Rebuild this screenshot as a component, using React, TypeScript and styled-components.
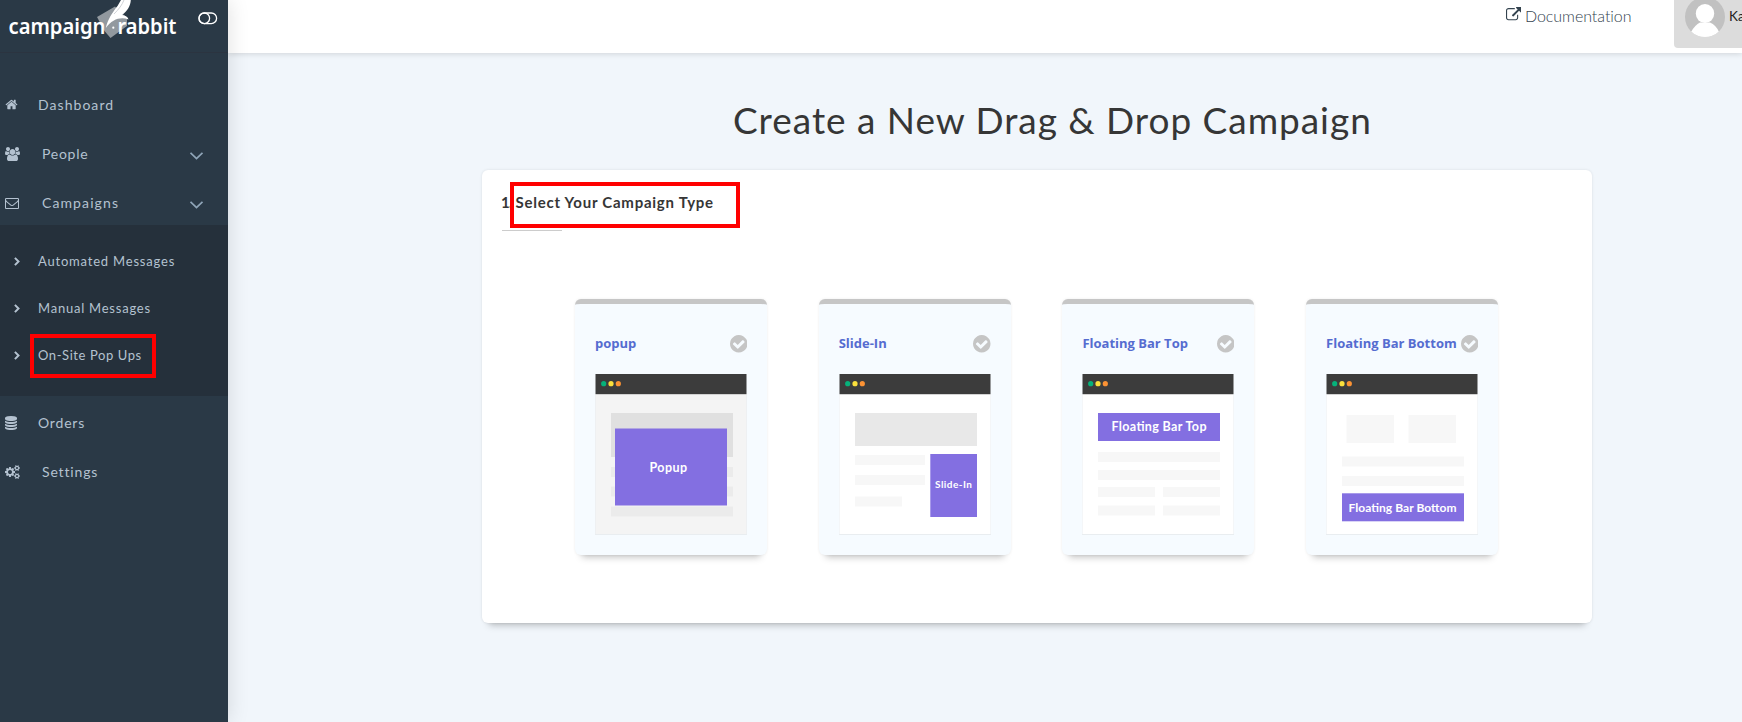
import React from 'react';
import styled, { createGlobalStyle } from 'styled-components';

const Global = createGlobalStyle`
  * { box-sizing: border-box; }
  body {
    margin: 0;
    height: 722px;
    overflow: hidden;
    background: #f1f6fb;
    font-family: Lato, "Liberation Sans", sans-serif;
    color: #363636;
  }
  svg { display: block; flex: none; }
`;

const icons = {
  home: {
    box: '0 0 1792 1792',
    d: 'M1472 992v480q0 26-19 45t-45 19h-384v-384h-256v384h-384q-26 0-45-19t-19-45v-480q0-1 .5-3t.5-3l575-474 575 474q1 2 1 6zm223-69l-62 74q-8 9-21 11h-3q-13 0-21-7l-692-577-692 577q-12 8-24 7-13-2-21-11l-62-74q-8-10-7-23.5t11-21.5l719-599q32-26 76-26t76 26l244 204v-195q0-14 9-23t23-9h192q14 0 23 9t9 23v408l219 182q10 8 11 21.5t-7 23.5z',
  },
  users: {
    box: '-64 0 1920 1792',
    d: 'M529 896q-162 5-265 128h-134q-82 0-138-40.5t-56-118.5q0-353 124-353 6 0 43.5 21t97.5 42.5 119 21.5q67 0 133-23-5 37-5 66 0 139 81 256zm1071 637q0 120-73 189.5t-194 69.5h-874q-121 0-194-69.5t-73-189.5q0-53 3.5-103.5t14-109 26.5-108.5 43-97.5 62-81 85.5-53.5 111.5-20q10 0 43 21.5t73 48 107 48 135 21.5 135-21.5 107-48 73-48 43-21.5q61 0 111.5 20t85.5 53.5 62 81 43 97.5 26.5 108.5 14 109 3.5 103.5zm-1024-1277q0 106-75 181t-181 75-181-75-75-181 75-181 181-75 181 75 75 181zm704 384q0 159-112.5 271.5t-271.5 112.5-271.5-112.5-112.5-271.5 112.5-271.5 271.5-112.5 271.5 112.5 112.5 271.5zm576 225q0 78-56 118.5t-138 40.5h-134q-103-123-265-128 81-117 81-256 0-29-5-66 66 23 133 23 59 0 119-21.5t97.5-42.5 43.5-21q124 0 124 353zm-128-609q0 106-75 181t-181 75-181-75-75-181 75-181 181-75 181 75 75 181z',
  },
  envelope: {
    box: '0 0 1792 1792',
    d: 'M1664 1504v-768q-32 36-69 66-268 206-426 338-51 43-83 67t-86.5 48.5-102.5 24.5h-2q-48 0-102.5-24.5t-86.5-48.5-83-67q-158-132-426-338-37-30-69-66v768q0 13 9.5 22.5t22.5 9.5h1472q13 0 22.5-9.5t9.5-22.5zm0-1051v-24.5l-.5-13-3-12.5-5.5-9-9-7.5-14-2.5h-1472q-13 0-22.5 9.5t-9.5 22.5q0 168 147 284 193 152 401 317 6 5 35 29.5t46 37.5 44.5 31.5 50.5 27.5 43 9h2q20 0 43-9t50.5-27.5 44.5-31.5 46-37.5 35-29.5q208-165 401-317 54-43 100.5-115.5t46.5-131.5zm128-37v1088q0 66-47 113t-113 47h-1472q-66 0-113-47t-47-113v-1088q0-66 47-113t113-47h1472q66 0 113 47t47 113z',
  },
  database: {
    box: '128 0 1536 1792',
    d: 'M896 768q237 0 443-43t325-127v170q0 69-103 128t-280 93.5-385 34.5-385-34.5-280-93.5-103-128v-170q119 84 325 127t443 43zm0 768q237 0 443-43t325-127v170q0 69-103 128t-280 93.5-385 34.5-385-34.5-280-93.5-103-128v-170q119 84 325 127t443 43zm0-384q237 0 443-43t325-127v170q0 69-103 128t-280 93.5-385 34.5-385-34.5-280-93.5-103-128v-170q119 84 325 127t443 43zm0-1152q208 0 385 34.5t280 93.5 103 128v128q0 69-103 128t-280 93.5-385 34.5-385-34.5-280-93.5-103-128v-128q0-69 103-128t280-93.5 385-34.5z',
  },
  cogs: {
    box: '-64 0 1920 1792',
    d: 'M832 896q0-106-75-181t-181-75-181 75-75 181 75 181 181 75 181-75 75-181zm768 512q0-52-38-90t-90-38-90 38-38 90q0 53 37.5 90.5t90.5 37.5 90.5-37.5 37.5-90.5zm0-1024q0-52-38-90t-90-38-90 38-38 90q0 53 37.5 90.5t90.5 37.5 90.5-37.5 37.5-90.5zm-384 421v185q0 10-7 19.5t-16 10.5l-155 24q-11 35-32 76 34 48 90 115 7 11 7 20 0 12-7 19-23 30-82.5 89.5t-78.5 59.5q-11 0-21-7l-115-90q-37 19-77 31-11 108-23 155-7 24-30 24h-186q-11 0-20-7.5t-10-17.5l-23-153q-34-10-75-31l-118 89q-7 7-20 7-11 0-21-8-144-133-144-160 0-9 7-19 10-14 41-53t47-61q-23-44-35-82l-152-24q-10-1-17-9.5t-7-19.5v-185q0-10 7-19.5t16-10.5l155-24q11-35 32-76-34-48-90-115-7-11-7-20 0-12 7-20 22-30 82-89t79-59q11 0 21 7l115 90q34-18 77-32 11-108 23-154 7-24 30-24h186q11 0 20 7.5t10 17.5l23 153q34 10 75 31l118-89q8-7 20-7 11 0 21 8 144 133 144 160 0 8-7 19-12 16-42 54t-45 60q23 48 34 82l152 23q10 2 17 10.5t7 19.5zm640 533v140q0 16-149 31-12 27-30 52 51 113 51 138 0 4-4 7-122 71-124 71-8 0-46-47t-52-68q-20 2-30 2t-30-2q-14 21-52 68t-46 47q-2 0-124-71-4-3-4-7 0-25 51-138-18-25-30-52-149-15-149-31v-140q0-16 149-31 13-29 30-52-51-113-51-138 0-4 4-7 4-2 35-20t59-34 30-16q8 0 46 46.5t52 67.5q20-2 30-2t30 2q51-71 92-112l6-2q4 0 124 70 4 3 4 7 0 25-51 138 17 23 30 52 149 15 149 31zm0-1024v140q0 16-149 31-12 27-30 52 51 113 51 138 0 4-4 7-122 71-124 71-8 0-46-47t-52-68q-20 2-30 2t-30-2q-14 21-52 68t-46 47q-2 0-124-71-4-3-4-7 0-25 51-138-18-25-30-52-149-15-149-31v-140q0-16 149-31 13-29 30-52-51-113-51-138 0-4 4-7 4-2 35-20t59-34 30-16q8 0 46 46.5t52 67.5q20-2 30-2t30 2q51-71 92-112l6-2q4 0 124 70 4 3 4 7 0 25-51 138 17 23 30 52 149 15 149 31z',
  },
  external: {
    box: '0 0 1792 1792',
    d: 'M1408 928v320q0 119-84.5 203.5t-203.5 84.5h-832q-119 0-203.5-84.5t-84.5-203.5v-832q0-119 84.5-203.5t203.5-84.5h704q14 0 23 9t9 23v64q0 14-9 23t-23 9h-704q-66 0-113 47t-47 113v832q0 66 47 113t113 47h832q66 0 113-47t47-113v-320q0-14 9-23t23-9h64q14 0 23 9t9 23zm384-864v512q0 26-19 45t-45 19-45-19l-176-176-652 652q-10 10-23 10t-23-10l-114-114q-10-10-10-23t10-23l652-652-176-176q-19-19-19-45t19-45 45-19h512q26 0 45 19t19 45z',
  },
  check: {
    box: '128 128 1536 1536',
    d: 'M1412 734q0-28-18-46l-91-90q-19-19-45-19t-45 19l-408 407-226-226q-19-19-45-19t-45 19l-91 90q-18 18-18 46 0 27 18 45l362 362q19 19 45 19 27 0 46-19l543-543q18-18 18-45zm252 162q0 209-103 385.5t-279.5 279.5-385.5 103-385.5-103-279.5-279.5-103-385.5 103-385.5 279.5-279.5 385.5-103 385.5 103 279.5 279.5 103 385.5z',
  },
};

type IconName = keyof typeof icons;

const Icon = ({ name, width, height }: { name: IconName; width: number; height: number }) => (
  <svg width={width} height={height} viewBox={icons[name].box} fill="currentColor">
    <path d={icons[name].d} />
  </svg>
);

const Page = styled.div`
  display: flex;
  height: 722px;
  overflow: hidden;
`;

const Sidebar = styled.aside`
  position: relative;
  z-index: 2;
  flex: none;
  width: 228px;
  background: #2a3946;
  color: #b4c2d0;
  box-shadow: 1px 0 20px rgba(0, 0, 0, 0.12);
`;

const Brand = styled.div`
  display: flex;
  justify-content: space-between;
  height: 53px;
  padding-right: 10px;
  border-bottom: 1px solid #2b3440;
`;

const Toggle = styled.svg`
  margin-top: 12px;
`;

const Nav = styled.nav`
  padding-top: 27px;
`;

const NavRow = styled.a`
  display: flex;
  align-items: center;
  height: 49px;
  padding: 0 25px 0 5px;
`;

const NavIcon = styled.span<{ $gap: number }>`
  flex: none;
  width: ${(p) => p.$gap}px;
`;

const NavText = styled.span<{ $spacing: number }>`
  flex: 1;
  font-size: 14px;
  line-height: 20px;
  letter-spacing: ${(p) => p.$spacing}px;
  white-space: nowrap;
`;

const SubMenu = styled.div`
  height: 171px;
  margin: -2px 0 2px;
  padding-top: 13px;
  background: #25303b;
`;

const SubRow = styled(NavRow)`
  height: 47px;
  padding-left: 14px;
`;

const SubText = styled(NavText)`
  padding-bottom: 2px;
  font-size: 13px;
`;

const Marker = styled.span<{ $x: number; $y: number; $w: number; $h: number }>`
  position: absolute;
  left: ${(p) => p.$x}px;
  top: ${(p) => p.$y}px;
  width: ${(p) => p.$w}px;
  height: ${(p) => p.$h}px;
  border: 4px solid #ff0000;
`;

const Content = styled.div`
  flex: 1;
  min-width: 0;
`;

const TopBar = styled.header`
  display: flex;
  justify-content: flex-end;
  height: 53px;
  background: #fff;
  box-shadow: 0 1px 6px rgba(0, 0, 0, 0.14);
`;

const DocLink = styled.a`
  display: flex;
  align-items: center;
  gap: 4px;
  height: 30px;
  margin-right: 43px;
  color: #34434f;
`;

const DocText = styled.span`
  width: 106px;
  padding-top: 1px;
  font-size: 16px;
  line-height: 20px;
  font-weight: 300;
  letter-spacing: -0.05px;
  white-space: nowrap;
`;

const User = styled.div`
  display: flex;
  gap: 4px;
  width: 68px;
  height: 48px;
  padding-left: 11px;
  overflow: hidden;
  border-radius: 0 0 0 4px;
  background: #dcdcdc;
  color: #222;
  font-size: 13.5px;
  line-height: 33px;
  white-space: nowrap;
`;

const Heading = styled.h1`
  margin: 45px 0 0;
  padding-left: 505px;
  font-size: 37px;
  line-height: 44px;
  font-weight: 400;
  letter-spacing: 0.97px;
  white-space: nowrap;
`;

const Panel = styled.section`
  position: relative;
  width: 1110px;
  height: 453px;
  margin: 28px 0 0 254px;
  padding: 22px 20px 0;
  border-radius: 6px;
  background: #fff;
  box-shadow: 0 0 3px rgba(0, 0, 0, 0.1), 0 9px 7px -7px rgba(0, 0, 0, 0.25);
`;

const PanelTitle = styled.h2`
  display: flex;
  margin: 0 0 0 -1px;
  height: 38px;
  font-size: 15px;
  line-height: 20px;
  font-weight: 700;
  letter-spacing: 0.75px;
`;

const Step = styled.span`
  width: 14.5px;
  letter-spacing: -0.8px;
`;

const Rule = styled.div`
  width: 60px;
  height: 1px;
  margin-bottom: 68px;
  background: #ccc;
`;

const Cards = styled.div`
  display: flex;
  gap: 51.7px;
  padding-left: 73px;
`;

const Card = styled.article`
  flex: none;
  width: 192px;
  height: 256px;
  padding: 31px 20px 0;
  border-top: 5px solid #c6c6c6;
  border-radius: 6px;
  background: #f6fbff;
  box-shadow: 0 0 3px rgba(0, 0, 0, 0.07), 0 9px 7px -7px rgba(0, 0, 0, 0.25);
`;

const CardHead = styled.div`
  display: flex;
  align-items: center;
  justify-content: space-between;
  height: 18px;
  margin-bottom: 21px;
  color: #c5c5c5;
`;

const CardTitle = styled.h3`
  margin: 0;
  padding-bottom: 2px;
  font-family: "Open Sans", sans-serif;
  font-size: 13px;
  line-height: 18px;
  font-weight: 700;
  white-space: nowrap;
  color: #556cd0;
`;

const Thumb = styled.svg`
  overflow: visible;
  font-family: Lato, sans-serif;
  font-weight: 700;
`;

const PURPLE = '#836fe1';

type Block = [number, number, number, number, string];
type CardSpec = {
  title: string;
  page: string;
  blocks: Block[];
  label: { text: string; x: number; y: number; length: number; size: number };
};

const cards: CardSpec[] = [
  {
    title: 'popup',
    page: '#f4f4f4',
    blocks: [
      [16, 39, 122, 44, '#e0e0e0'],
      [16, 93, 122, 10, '#ebebeb'],
      [16, 112.5, 122, 10, '#ebebeb'],
      [16, 132.5, 122, 10, '#ebebeb'],
      [20, 54.5, 112, 77, PURPLE],
    ],
    label: { text: 'Popup', x: 54.5, y: 98, length: 37.5, size: 12.5 },
  },
  {
    title: 'Slide-In',
    page: '#fff',
    blocks: [
      [16, 39, 122, 33, '#e8e8e8'],
      [16, 81, 70, 10, '#f7f7f7'],
      [16, 101, 70, 10, '#f7f7f7'],
      [16, 122.5, 47, 10, '#f7f7f7'],
      [91.3, 80, 46.7, 63, PURPLE],
    ],
    label: { text: 'Slide-In', x: 96, y: 113.5, length: 37, size: 10 },
  },
  {
    title: 'Floating Bar Top',
    page: '#fff',
    blocks: [
      [16, 39, 122, 28, PURPLE],
      [16, 78, 122, 10, '#f7f7f7'],
      [16, 96, 122, 10, '#f7f7f7'],
      [16, 113, 57, 10, '#f7f7f7'],
      [81, 113, 57, 10, '#f7f7f7'],
      [16, 131.5, 57, 10, '#f7f7f7'],
      [81, 131.5, 57, 10, '#f7f7f7'],
    ],
    label: { text: 'Floating Bar Top', x: 29.5, y: 57, length: 95, size: 12.5 },
  },
  {
    title: 'Floating Bar Bottom',
    page: '#fff',
    blocks: [
      [20.5, 41, 47.5, 28, '#f7f7f7'],
      [82.5, 41, 47.5, 28, '#f7f7f7'],
      [16, 82.5, 122, 10, '#f7f7f7'],
      [16, 102, 122, 10, '#f7f7f7'],
      [16, 119.3, 122, 28, PURPLE],
    ],
    label: { text: 'Floating Bar Bottom', x: 22.5, y: 138, length: 108, size: 12 },
  },
];

const Preview = ({ spec }: { spec: CardSpec }) => (
  <Thumb width="152" height="161" viewBox="0 0 152 161">
    <rect x="0" y="20" width="152" height="141" fill="#e9edf0" />
    <rect x="0.5" y="20" width="151" height="140" fill={spec.page} />
    <rect x="0.5" y="0" width="151" height="20" fill="#3c3c3c" />
    <rect x="0.5" y="20" width="151" height="0.8" fill="#c8c8c8" />
    <circle cx="8.7" cy="9.7" r="2.6" fill="#06b27b" />
    <circle cx="16" cy="9.7" r="2.6" fill="#fbe03c" />
    <circle cx="23.3" cy="9.7" r="2.6" fill="#fb9234" />
    {spec.blocks.map(([x, y, w, h, fill], i) => (
      <rect key={i} x={x} y={y} width={w} height={h} fill={fill} />
    ))}
    <text x={spec.label.x} y={spec.label.y} fontSize={spec.label.size} textLength={spec.label.length} fill="#fff">
      {spec.label.text}
    </text>
  </Thumb>
);

const Logo = () => (
  <svg width="190" height="48" viewBox="0 0 190 48">
    <path d="M97 17 L115 6.5 L127 18 L127 26 L110.5 38 L104.5 31 Z" fill="#92999f" />
    <path d="M105.8 28 C108 19 112 13 117.5 6 L121 0 L130.8 0 C130.5 6 127.5 11 122 15 C125.5 15.2 128 17 128.5 19.5 C121 16.5 112 19 105.8 28 Z" fill="#fff" />
    <path d="M114 14 C119 9 122 5 124 0" fill="none" stroke="#c9cdd1" strokeWidth="0.9" />
    <circle cx="113.3" cy="27.7" r="1.1" fill="#fff" />
    <g fill="#fff" fontFamily='"Noto Sans", sans-serif' fontWeight="600" fontSize="22">
      <text x="8.5" y="34" textLength="97" lengthAdjust="spacingAndGlyphs">campaign</text>
      <text x="117.5" y="34" textLength="59" lengthAdjust="spacingAndGlyphs">rabbit</text>
    </g>
  </svg>
);

const ChevronSvg = styled.svg`
  margin-top: 4px;
`;

const Chevron = () => (
  <ChevronSvg width="13" height="8" viewBox="0 0 13 8" fill="none" stroke="#8fa5b8" strokeWidth="1.8">
    <path d="M0.5 0.8 L6.5 6.6 L12.5 0.8" />
  </ChevronSvg>
);

const Angle = () => (
  <svg width="6" height="9" viewBox="0 0 6 9" fill="none" stroke="currentColor" strokeWidth="2">
    <path d="M0.9 0.9 L4.5 4.5 L0.9 8.1" />
  </svg>
);

export default function App() {
  return (
    <>
      <Global />
      <Page>
        <Sidebar>
          <Brand>
            <Logo />
            <Toggle width="20" height="13" viewBox="0 0 20 13" fill="none" stroke="#fff" strokeWidth="1.3">
              <rect x="1" y="1" width="17.6" height="10.6" rx="5.3" />
              <circle cx="6.3" cy="6.3" r="5.3" />
            </Toggle>
          </Brand>
          <Nav>
            <NavRow>
              <NavIcon $gap={33}><Icon name="home" width={13} height={13} /></NavIcon>
              <NavText $spacing={1.05}>Dashboard</NavText>
            </NavRow>
            <NavRow>
              <NavIcon $gap={37}><Icon name="users" width={15} height={14} /></NavIcon>
              <NavText $spacing={0.75}>People</NavText>
              <Chevron />
            </NavRow>
            <NavRow>
              <NavIcon $gap={37}><Icon name="envelope" width={14} height={14} /></NavIcon>
              <NavText $spacing={1.1}>Campaigns</NavText>
              <Chevron />
            </NavRow>
            <SubMenu>
              <SubRow>
                <NavIcon $gap={24}><Angle /></NavIcon>
                <SubText $spacing={0.8}>Automated Messages</SubText>
              </SubRow>
              <SubRow>
                <NavIcon $gap={24}><Angle /></NavIcon>
                <SubText $spacing={0.77}>Manual Messages</SubText>
              </SubRow>
              <SubRow>
                <NavIcon $gap={24}><Angle /></NavIcon>
                <SubText $spacing={0.58}>On-Site Pop Ups</SubText>
              </SubRow>
            </SubMenu>
            <NavRow>
              <NavIcon $gap={33}><Icon name="database" width={12} height={14} /></NavIcon>
              <NavText $spacing={0.8}>Orders</NavText>
            </NavRow>
            <NavRow>
              <NavIcon $gap={37}><Icon name="cogs" width={15} height={14} /></NavIcon>
              <NavText $spacing={0.85}>Settings</NavText>
            </NavRow>
          </Nav>
          <Marker $x={30} $y={334} $w={126} $h={44} />
        </Sidebar>
        <Content>
          <TopBar>
            <DocLink>
              <Icon name="external" width={15.5} height={15.5} />
              <DocText>Documentation</DocText>
            </DocLink>
            <User>
              <svg width="40" height="38" viewBox="0 0 40 38">
                <defs>
                  <clipPath id="avatar"><circle cx="20" cy="17" r="20" /></clipPath>
                </defs>
                <circle cx="20" cy="17" r="20" fill="#c1c1c1" />
                <g clipPath="url(#avatar)" fill="#fff">
                  <ellipse cx="20" cy="13.5" rx="9.2" ry="9.5" />
                  <path d="M6 32 Q10 25 15 22.5 L25 22.5 Q31 25 34 32 L34 38 L6 38 Z" />
                </g>
              </svg>
              Ka
            </User>
          </TopBar>
          <Heading>Create a New Drag &amp; Drop Campaign</Heading>
          <Panel>
            <PanelTitle>
              <Step>1.</Step>
              Select Your Campaign Type
            </PanelTitle>
            <Rule />
            <Cards>
              {cards.map((spec) => (
                <Card key={spec.title}>
                  <CardHead>
                    <CardTitle>{spec.title}</CardTitle>
                    <Icon name="check" width={17.5} height={17.5} />
                  </CardHead>
                  <Preview spec={spec} />
                </Card>
              ))}
            </Cards>
            <Marker $x={28} $y={12} $w={230} $h={46} />
          </Panel>
        </Content>
      </Page>
    </>
  );
}
